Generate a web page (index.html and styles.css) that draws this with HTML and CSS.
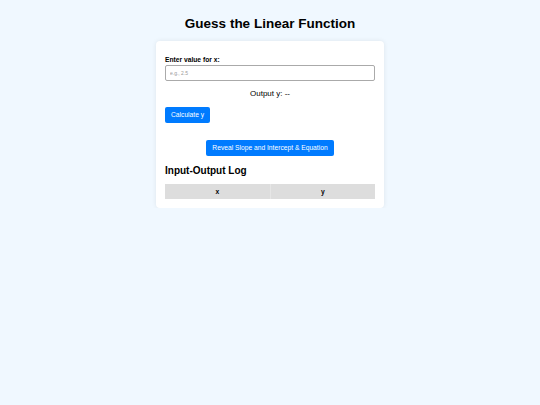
FILE: index.html
```html
<!DOCTYPE html>
<html>
<head>
<meta charset="utf-8">
<title>Guess the Linear Function</title>
<link rel="stylesheet" href="styles.css">
</head>
<body>
<h1 class="title">Guess the Linear Function</h1>
<div class="card">
  <label class="label" for="xval">Enter value for x:</label>
  <input class="input" id="xval" type="text" placeholder="e.g., 2.5">
  <p class="output">Output y: --</p>
  <button class="btn">Calculate y</button>
  <div class="reveal-row"><button class="btn">Reveal Slope and Intercept &amp; Equation</button></div>
  <h2 class="log-title">Input-Output Log</h2>
  <table class="log">
    <thead><tr><th>x</th><th>y</th></tr></thead>
    <tbody></tbody>
  </table>
</div>
</body>
</html>
```

FILE: styles.css
```css
* { box-sizing: border-box; }
html, body { margin: 0; padding: 0; }
body {
  background: #f0f8ff;
  font-family: "Liberation Sans", Arial, sans-serif;
  color: #000;
}
.title {
  margin: 16px 0 0;
  font-size: 13.5px;
  line-height: 16px;
  text-align: center;
  font-weight: bold;
}
.card {
  width: 228px;
  margin: 9px auto 0;
  background: #fff;
  border-radius: 4px;
  box-shadow: 0 0 5px rgba(0, 0, 0, 0.08);
  padding: 15px 9px 9px;
}
.label {
  display: block;
  font-size: 6.7px;
  line-height: 8px;
  font-weight: bold;
  margin-bottom: 1px;
}
.input {
  display: block;
  width: 210px;
  height: 16px;
  margin: 0;
  border: 1px solid #aaa;
  border-radius: 2px;
  padding: 0 4px;
  font-family: "Liberation Sans", Arial, sans-serif;
  font-size: 5px;
}
.input::placeholder { color: #999; }
.output {
  margin: 8px 0 0;
  font-size: 8px;
  line-height: 10px;
  text-align: center;
}
.btn {
  display: inline-block;
  margin: 8px 0 0;
  height: 16px;
  padding: 0 6px;
  background: #007bff;
  color: #fff;
  border: none;
  border-radius: 2px;
  font-family: "Liberation Sans", Arial, sans-serif;
  font-size: 6.7px;
  line-height: 16px;
}
.reveal-row {
  text-align: center;
  margin-top: 7px;
}
.reveal-row .btn { margin: 10px 0 0; }
.log-title {
  margin: 9px 0 0;
  font-size: 10px;
  line-height: 12px;
  font-weight: bold;
}
.log {
  width: 210px;
  margin-top: 7px;
  border-collapse: collapse;
}
.log th {
  background: #ddd;
  height: 15px;
  padding: 0;
  font-size: 6.7px;
  font-weight: bold;
  border-left: 1px solid #e6e6e6;
  width: 50%;
}
.log th:first-child { border-left: none; }
```
